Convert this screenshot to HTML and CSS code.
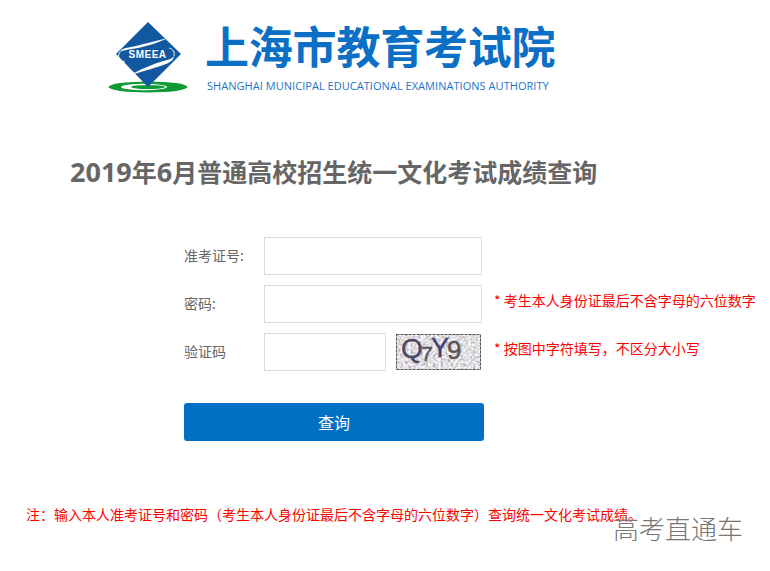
FILE: index.html
```html
<!DOCTYPE html>
<html lang="zh-CN">
<head>
  <meta charset="UTF-8" />
  <meta name="viewport" content="width=device-width, initial-scale=1.0"/>
  <title>上海市教育考试院</title>
  <link rel="stylesheet" href="styles.css">
</head>
<body>
  <!-- Logo and name -->
  <div class="header">
    <svg class="logo" width="80" height="76" viewBox="0 0 80 76">
      <ellipse cx="40" cy="66" rx="39.500" ry="5.500" fill="#0f9a36"/>
      <ellipse cx="36" cy="66" rx="23" ry="3.200" fill="#fff"/>
      <ellipse cx="40" cy="66" rx="17" ry="2" fill="#0f9a36"/>
      <path d="M40 1 L73 33 L40 66 L8 33 Z" fill="#11589f"/>
      <path d="M60 17 C46 20 33 24 23 26 C17 27 13 28 12 31 C15 29 19 29 24 28 C36 26 50 22 60 17 Z" fill="#fff"/>
      <path d="M23 54 C36 50 50 46 58 43 C63 41 66 38 66 35 C64 38 60 39 55 40 C46 43 32 48 23 54 Z" fill="#fff"/>
      <path d="M12 31 C9 35 11 40 17 41 M66 35 C67 31 65 28 61 27" fill="none" stroke="#fff" stroke-width="1"/>
      <text class="logo-text" x="39.500" y="37" text-anchor="middle">SMEEA</text>
    </svg>
    <div class="brand">
      <div class="brand-name">上海市教育考试院</div>
      <div class="brand-en">SHANGHAI MUNICIPAL EDUCATIONAL EXAMINATIONS AUTHORITY</div>
    </div>
  </div>

  <h1 class="title"><span class="title-num">2019</span>年<span class="title-num">6</span>月普通高校招生统一文化考试成绩查询</h1>

  <form class="form">
    <div class="row">
      <label class="label">准考证号:</label>
      <input class="input" type="text">
    </div>
    <div class="row">
      <label class="label">密码:</label>
      <input class="input" type="text">
      <span class="hint">* 考生本人身份证最后不含字母的六位数字</span>
    </div>
    <div class="row">
      <label class="label">验证码</label>
      <input class="input input-short" type="text">
      <svg class="captcha" width="85" height="36" viewBox="0 0 85 36">
        <filter id="noise" x="0" y="0" width="100%" height="100%">
          <feTurbulence type="fractalNoise" baseFrequency="0.4" numOctaves="3" seed="7"/>
          <feColorMatrix type="matrix" values="0.8 0.8 0 0 -0.04  0.8 0.8 0 0 -0.06  0.8 0.8 0 0 -0.03  0 0 0 0 1"/>
        </filter>
        <rect width="85" height="36" filter="url(#noise)"/>
        <rect x="0.500" y="0.500" width="84" height="35" fill="none" stroke="#555" stroke-dasharray="3 1"/>
        <text class="cap-text"><tspan x="5" y="24" font-size="28" fill="#4e4766">Q</tspan><tspan x="25" y="27" font-size="21" fill="#5c5760">7</tspan><tspan x="35" y="23" font-size="27" fill="#413d82">Y</tspan><tspan x="51" y="25" font-size="26" fill="#5e5648">9</tspan></text>
      </svg>
      <span class="hint">* 按图中字符填写，不区分大小写</span>
    </div>
    <button class="submit" type="button">查询</button>
  </form>

  <p class="note">注：输入本人准考证号和密码（考生本人身份证最后不含字母的六位数字）查询统一文化考试成绩。</p>

  <!-- Watermark over the page -->
  <div class="watermark">高考直通车</div>
</body>
</html>
```

FILE: styles.css
```css
html, body {
  margin: 0;
  padding: 0;
  height: 100%;
  background: white;
  font-family: "Noto Sans CJK SC", "Noto Sans", sans-serif;
  overflow: hidden;
}

body {
  position: relative;
}

/* Header */
.header {
  display: flex;
  align-items: flex-start;
  gap: 17px;
  padding: 21px 0 0 108px;
}

.logo {
  display: block;
}

.logo-text {
  font-family: "Liberation Sans", sans-serif;
  font-size: 10px;
  font-weight: bold;
  fill: #fff;
  letter-spacing: 0.5px;
}

.brand-name {
  font-size: 44px;
  font-weight: bold;
  line-height: 48px;
  letter-spacing: -0.2px;
  color: #0b6fc6;
}

.brand-en {
  font-family: "Open Sans", sans-serif;
  font-size: 11px;
  line-height: 16px;
  letter-spacing: 0.04px;
  margin: 9px 0 0 2px;
  color: #1a75c8;
  white-space: nowrap;
}

/* Title */
.title {
  margin: 56px 0 0 70px;
  font-size: 25px;
  line-height: 36px;
  font-weight: bold;
  color: #666;
}

.title-num {
  font-family: "Open Sans", sans-serif;
  font-size: 27px;
}

/* Form */
.form {
  display: flex;
  flex-direction: column;
  gap: 10px;
  margin: 47px 0 0 184px;
}

.row {
  display: flex;
  align-items: center;
  height: 38px;
  white-space: nowrap;
}

.label {
  width: 80px;
  margin-bottom: 2px;
  font-size: 14px;
  color: #666;
}

.input {
  box-sizing: border-box;
  width: 218px;
  height: 38px;
  margin: 0;
  border: 1px solid #ddd;
  background: #fff;
}

.input-short {
  width: 122px;
}

.captcha {
  display: block;
  margin-left: 10px;
}

.cap-text {
  font-family: "Liberation Sans", sans-serif;
  stroke: #4e4a60;
  stroke-width: 0.4px;
}

.hint {
  margin: 0 0 8px 12px;
  font-size: 14px;
  color: #f00;
}

.captcha + .hint {
  margin-left: 13px;
}

.submit {
  width: 300px;
  height: 38px;
  margin-top: 22px;
  border: none;
  border-radius: 3px;
  background: #0070c4;
  color: #fff;
  font-family: inherit;
  font-size: 16px;
}

.note {
  margin: 64px 0 0 26px;
  font-size: 14px;
  line-height: 18px;
  color: #f00;
  white-space: nowrap;
}

.watermark {
  position: absolute;
  left: 613px;
  top: 510px;
  font-size: 26px;
  line-height: 36px;
  font-weight: 300;
  color: #777;
}
```
